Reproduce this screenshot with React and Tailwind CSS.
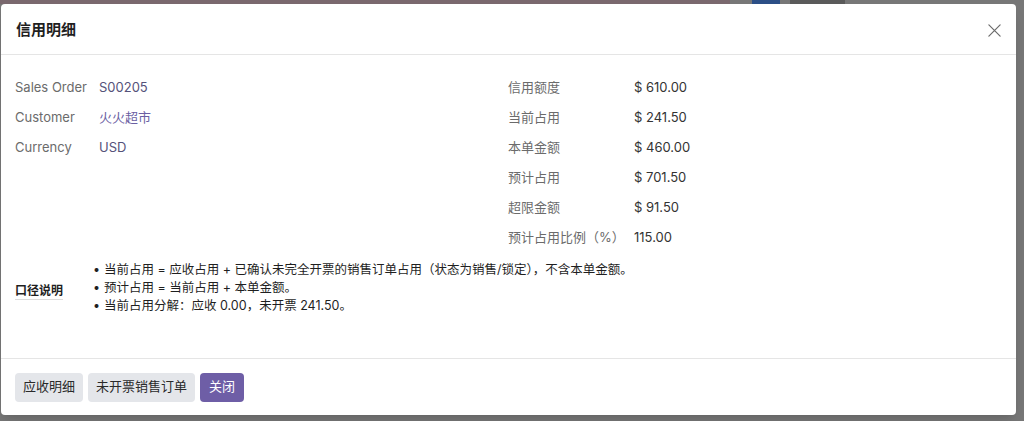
import React from 'react';

const font = { fontFamily: 'Inter, "Noto Sans CJK SC", "Noto Sans", sans-serif' };

const orderFields = [
  { label: 'Sales Order', value: 'S00205', tone: 'text-[#55527a]' },
  { label: 'Customer', value: '火火超市', tone: 'text-[#6b5fa3]' },
  { label: 'Currency', value: 'USD', tone: 'text-[#55527a]' },
];

const creditFields = [
  { label: '信用额度', value: '$ 610.00' },
  { label: '当前占用', value: '$ 241.50' },
  { label: '本单金额', value: '$ 460.00' },
  { label: '预计占用', value: '$ 701.50' },
  { label: '超限金额', value: '$ 91.50' },
  { label: '预计占用比例（%）', value: '115.00' },
];

const notes = [
  '当前占用 = 应收占用 + 已确认未完全开票的销售订单占用（状态为销售/锁定），不含本单金额。',
  '预计占用 = 当前占用 + 本单金额。',
  '当前占用分解：应收 0.00，未开票 241.50。',
];

const FieldRow = ({ label, value, labelWidth, tone }) => (
  <div className="flex h-[30px] items-center text-[13px]">
    <span className={`${labelWidth} shrink-0 text-[#6b6b6b]`}>{label}</span>
    <span className={tone}>{value}</span>
  </div>
);

export default function App() {
  return (
    <div className="flex h-[421px] w-[1024px] flex-col overflow-hidden bg-[#777777]" style={font}>
      {/* page behind the backdrop, only a sliver shows */}
      <div className="flex h-[4px] shrink-0 overflow-hidden">
        <div className="w-[730px] bg-[#7a686e]" />
        <div className="ml-[22px] flex items-end gap-[10px]">
          <span className="h-[4px] w-[28px] bg-[#2c4f86]" />
          <span className="h-[4px] w-[55px] bg-[#5a5a5a]" />
        </div>
      </div>

      <div className="ml-px mr-2 flex flex-1 flex-col rounded-[4px] bg-white shadow-lg">
        <div className="flex h-[51px] items-center justify-between border-b border-[#e5e5e5] pl-[15px] pr-[14px] pt-[2px]">
          <h4 className="text-[15px] font-bold text-[#1f1f1f]">信用明细</h4>
          <svg width="15" height="15" viewBox="0 0 16 16" className="text-[#6b6b6b]">
            <path d="M2 2L14 14M14 2L2 14" stroke="currentColor" strokeWidth="1.3" strokeLinecap="round" />
          </svg>
        </div>

        <div className="flex-1 pl-[14px] pr-4 pt-[18px]">
          <div className="grid grid-cols-[493px_1fr]">
            <div>
              {orderFields.map((f) => (
                <FieldRow key={f.label} {...f} labelWidth="w-[84px]" />
              ))}
            </div>
            <div>
              {creditFields.map((f) => (
                <FieldRow key={f.label} {...f} labelWidth="w-[126px]" tone="text-[#333333]" />
              ))}
            </div>
          </div>

          <div className="mt-[8px] flex items-center">
            <span className="w-[78px] shrink-0 pt-[6px] text-[12px] font-bold text-[#1f1f1f]">
              <span className="border-b border-[#dcdcdc] pb-px">口径说明</span>
            </span>
            <ul className="text-[12.5px] leading-[18px] text-[#1f1f1f]">
              {notes.map((n) => (
                <li key={n} className="flex">
                  <span className="w-[11px] shrink-0">•</span>
                  <span>{n}</span>
                </li>
              ))}
            </ul>
          </div>
        </div>

        <div className="flex h-[57px] items-center gap-[5px] border-t border-[#e5e5e5] px-[14px]">
          <button className="h-[29px] rounded-[4px] bg-[#e4e6ea] px-2 text-[13px] text-[#2a2a2a]">应收明细</button>
          <button className="h-[29px] rounded-[4px] bg-[#e4e6ea] px-2 text-[13px] text-[#2a2a2a]">未开票销售订单</button>
          <button className="h-[29px] rounded-[4px] bg-[#6e5ea6] px-[9px] text-[13px] text-white">关闭</button>
        </div>
      </div>

      <div className="h-[6px] shrink-0" />
    </div>
  );
}
